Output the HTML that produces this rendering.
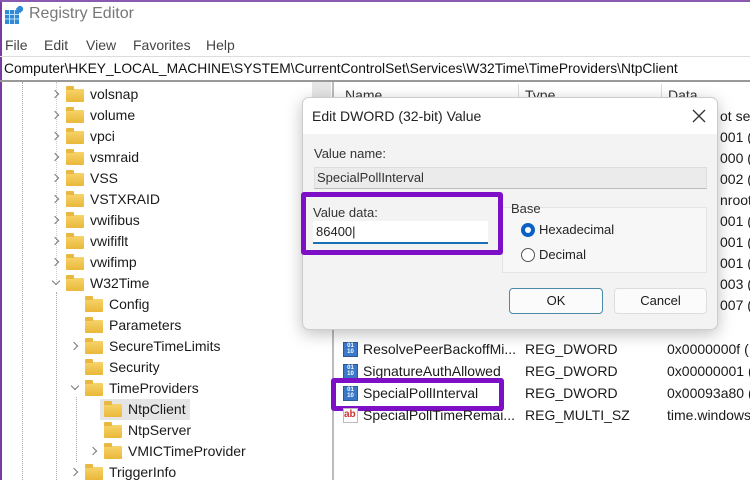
<!DOCTYPE html>
<html><head><meta charset="utf-8"><style>
*{margin:0;padding:0;box-sizing:border-box}
body{width:750px;height:480px;overflow:hidden;background:#fff;font-family:"Liberation Sans",sans-serif;font-size:14px;color:#1a1a1a;position:relative}
.a{position:absolute;white-space:nowrap}
.f{position:absolute;width:18px;height:13px;background:linear-gradient(#f7d36a,#eab83a);border-radius:1px}
.f:before{content:"";position:absolute;left:0;top:-3px;width:8px;height:4px;background:#e9b840;border-radius:1px 1px 0 0}
.ch{position:absolute;width:6px;height:6px;border-right:1.3px solid #777;border-bottom:1.3px solid #777}
.r{transform:rotate(-45deg)}
.d{transform:rotate(45deg)}
.ic{position:absolute;width:15px;height:15px;background:#3a78c8;border:1px solid #2a5a9a;color:#fff;font-size:6px;line-height:6px;text-align:center;font-weight:bold}
</style></head><body>
<div class="a" style="left:0;top:0;width:2px;height:480px;background:#7a3aa0"></div>
<div class="a" style="left:0;top:0;width:750px;height:2px;background:#8a5ab0"></div>
<svg class="a" style="left:5px;top:6px" width="18" height="18"><rect x="0" y="4" width="14" height="14" fill="#2f8ad6"/><path d="M0 8.5h14M0 13h14M4.5 4v14M9.5 4v14" stroke="#bfe0f7" stroke-width="1"/><rect x="12" y="0" width="6" height="6" fill="#2f8ad6" transform="rotate(45 15 3)"/></svg>
<div class="a" style="left:29px;top:5px;font-size:16px;color:#777">Registry Editor</div>
<div class="a" style="left:5px;top:37px;color:#444">File</div>
<div class="a" style="left:44px;top:37px;color:#444">Edit</div>
<div class="a" style="left:86px;top:37px;color:#444">View</div>
<div class="a" style="left:133px;top:37px;color:#444">Favorites</div>
<div class="a" style="left:206px;top:37px;color:#444">Help</div>
<div class="a" style="left:0;top:56px;width:750px;height:1px;background:#ddd"></div>
<div class="a" style="left:4px;top:61px;font-size:13.8px;color:#111">Computer\HKEY_LOCAL_MACHINE\SYSTEM\CurrentControlSet\Services\W32Time\TimeProviders\NtpClient</div>
<div class="a" style="left:0;top:80px;width:750px;height:2px;background:#999"></div>
<div class="a" style="left:312px;top:82px;width:19px;height:20px;background:#e6e6e6"></div>
<div class="a" style="left:332px;top:82px;width:2px;height:398px;background:#bbb"></div>
<div class="a" style="left:22px;top:82px;height:398px;border-left:1px dotted #aaa"></div>
<div class="a" style="left:56px;top:292px;height:188px;border-left:1px dotted #aaa"></div>
<div class="a" style="left:56px;top:82px;height:200px;border-left:1px dotted #ccc"></div>
<div class="a" style="left:76px;top:397px;height:65px;border-left:1px dotted #aaa"></div>
<div id="tree"></div>
<div class="a" style="left:345px;top:87px;color:#333">Name</div>
<div class="a" style="left:518px;top:84px;width:1px;height:20px;background:#ddd"></div>
<div class="a" style="left:525px;top:87px;color:#333">Type</div>
<div class="a" style="left:661px;top:84px;width:1px;height:20px;background:#ddd"></div>
<div class="a" style="left:668px;top:87px;color:#333">Data</div>
<div class="a" style="left:720px;top:108px">ot set</div>
<div class="a" style="left:720px;top:129px">001 (</div>
<div class="a" style="left:720px;top:150px">000 (</div>
<div class="a" style="left:720px;top:171px">002 (</div>
<div class="a" style="left:720px;top:192px">nroot'</div>
<div class="a" style="left:720px;top:213px">001 (</div>
<div class="a" style="left:720px;top:234px">001 (</div>
<div class="a" style="left:720px;top:255px">001 (</div>
<div class="a" style="left:720px;top:276px">003 (</div>
<div class="a" style="left:720px;top:297px">007 (</div>
<div class="ic" style="left:343px;top:342px">01<br>10</div><div class="a" style="left:363px;top:341px">ResolvePeerBackoffMi...</div><div class="a" style="left:525px;top:341px">REG_DWORD</div><div class="a" style="left:667px;top:341px">0x0000000f (</div>
<div class="ic" style="left:343px;top:364px">01<br>10</div><div class="a" style="left:363px;top:363px">SignatureAuthAllowed</div><div class="a" style="left:525px;top:363px">REG_DWORD</div><div class="a" style="left:667px;top:363px">0x00000001 (</div>
<div class="a" style="left:331px;top:378px;width:173px;height:33px;border:5px solid #7d0fc7;border-radius:3px;background:#fff"></div>
<div class="ic" style="left:343px;top:386px">01<br>10</div><div class="a" style="left:363px;top:385px">SpecialPollInterval</div><div class="a" style="left:525px;top:385px">REG_DWORD</div><div class="a" style="left:667px;top:385px">0x00093a80 (</div>
<div class="a" style="left:343px;top:408px;width:15px;height:15px;border:1px solid #bbb;color:#c33;font-size:10px;font-weight:bold;line-height:11px;background:#fff">ab</div><div class="a" style="left:363px;top:407px">SpecialPollTimeRemai...</div><div class="a" style="left:525px;top:407px">REG_MULTI_SZ</div><div class="a" style="left:667px;top:407px">time.windows</div>
<div class="a" style="left:302px;top:97px;width:416px;height:233px;background:#f3f3f3;border:1px solid #ccc;border-radius:7px;box-shadow:0 4px 16px rgba(0,0,0,.25);overflow:hidden">
<div class="a" style="left:0;top:0;width:416px;height:36px;background:#fff"></div>
<div class="a" style="left:9px;top:10px;color:#222">Edit DWORD (32-bit) Value</div>
<svg class="a" style="left:389px;top:11px" width="14" height="14"><path d="M1 1L13 13M13 1L1 13" stroke="#333" stroke-width="1.3"/></svg>
<div class="a" style="left:11px;top:48px;font-size:13px;color:#333">Value name:</div>
<div class="a" style="left:11px;top:69px;width:393px;height:22px;background:#ebebeb;border:1px solid #ddd;border-bottom-color:#bbb"></div>
<div class="a" style="left:14px;top:72px;font-size:13px;color:#333">SpecialPollInterval</div>
<div class="a" style="left:199px;top:109px;width:205px;height:66px;background:#f7f7f7;border:1px solid #e3e3e3"></div>
<div class="a" style="left:208px;top:103px;font-size:13px;color:#333">Base</div>
<div class="a" style="left:218px;top:125px;width:14px;height:14px;border-radius:50%;background:#0b61c4"><div class="a" style="left:4px;top:4px;width:6px;height:6px;border-radius:50%;background:#fff"></div></div>
<div class="a" style="left:236px;top:124px;font-size:13px;color:#222">Hexadecimal</div>
<div class="a" style="left:218px;top:150px;width:14px;height:14px;border-radius:50%;border:1px solid #555;background:#fff"></div>
<div class="a" style="left:236px;top:149px;font-size:13px;color:#222">Decimal</div>
<div class="a" style="left:206px;top:190px;width:94px;height:26px;background:#fbfbfb;border:1px solid #4a8aa8;border-radius:4px;text-align:center;line-height:24px;font-size:13px">OK</div>
<div class="a" style="left:311px;top:190px;width:93px;height:26px;background:#fbfbfb;border:1px solid #ddd;border-radius:4px;text-align:center;line-height:24px;font-size:13px">Cancel</div>
</div>
<div class="a" style="left:301px;top:192px;width:202px;height:63px;border:5px solid #7d0fc7;border-radius:3px;background:#f3f3f3"></div>
<div class="a" style="left:313px;top:205px;font-size:13px;color:#333">Value data:</div>
<div class="a" style="left:313px;top:221px;width:175px;height:23px;background:#fff;border-bottom:2px solid #1a6fb5"></div>
<div class="a" style="left:316px;top:224px;font-size:13px;color:#222">86400|</div>
<script>
var items=[["volsnap",0,"r"],["volume",0,"r"],["vpci",0,"r"],["vsmraid",0,"r"],["VSS",0,"r"],["VSTXRAID",0,"r"],["vwifibus",0,"r"],["vwififlt",0,"r"],["vwifimp",0,"r"],["W32Time",0,"d"],["Config",1,""],["Parameters",1,""],["SecureTimeLimits",1,"r"],["Security",1,""],["TimeProviders",1,"d"],["NtpClient",2,"",1],["NtpServer",2,""],["VMICTimeProvider",2,"r"],["TriggerInfo",1,"r"]];
var h="";items.forEach(function(it,i){var y=85+i*21,x=66+it[1]*19;
if(it[3])h+='<div class="a" style="left:'+(x-4)+'px;top:'+(y-1)+'px;width:90px;height:21px;background:#e5e5e5"></div>';
if(it[2]=="r")h+='<div class="ch r" style="left:'+(x-14)+'px;top:'+(y+6)+'px"></div>';
if(it[2]=="d")h+='<div class="ch d" style="left:'+(x-13)+'px;top:'+(y+4)+'px"></div>';
h+='<div class="f" style="left:'+x+'px;top:'+(y+4)+'px"></div><div class="a" style="left:'+(x+24)+'px;top:'+(y+1)+'px">'+it[0]+'</div>';});
document.getElementById("tree").innerHTML=h;
</script>
</body></html>
